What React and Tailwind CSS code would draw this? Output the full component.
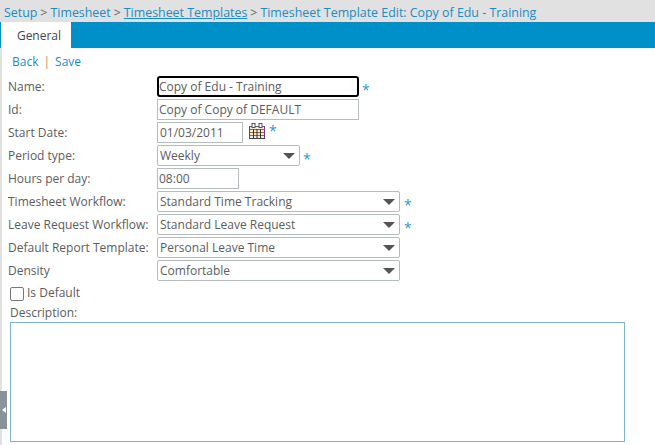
const blue = 'text-[#1a8cc4]';

function Star({ className = '' }) {
  return <span className={`text-[#2a9bd0] text-[14px] leading-none ${className}`}>*</span>;
}

function Row({ label, children }) {
  return (
    <div className="flex items-center h-[23px]">
      <div className="w-[150px] pl-[1px] shrink-0">{label}</div>
      {children}
    </div>
  );
}

function TextBox({ value, width, className = '' }) {
  return (
    <div className={`h-[21px] border border-[#b4bcbe] flex items-center pl-[1px] ${width} ${className}`}>{value}</div>
  );
}

function Select({ value, width }) {
  return (
    <div className={`h-[21px] border border-[#b4bcbe] rounded-[2px] flex items-center justify-between pl-[2px] pr-[3px] ${width}`}>
      <span>{value}</span>
      <svg width="12" height="6" viewBox="0 0 12 6" className="mr-[1px]"><path d="M0 0H12L6 6Z" fill="#555" /></svg>
    </div>
  );
}

function CalendarIcon() {
  return (
    <svg width="16" height="16" viewBox="0 0 16 16" className="ml-[6px] -mt-[4px]">
      <rect x="0.5" y="3.5" width="15" height="12" fill="#f3ead8" />
      <path d="M1 6.5H15M1 9.5H15M1 12.5H15" stroke="#a5672f" />
      <path d="M4.5 6V15M8 6V15M11.5 6V15" stroke="#333" />
      <path d="M0.5 3V16M15.5 3V16" stroke="#7a2f96" />
      <path d="M0 15.5H16" stroke="#444" />
      <path d="M1 3.5H15" stroke="#666" />
      <rect x="3" y="0.5" width="3" height="4" fill="#fff" stroke="#555" />
      <rect x="10" y="0.5" width="3" height="4" fill="#fff" stroke="#555" />
    </svg>
  );
}

export default function App() {
  return (
    <div className="h-[445px] w-[655px] overflow-hidden bg-white text-[12px] text-[#5c5c5c] font-['Open_Sans',sans-serif] flex flex-col relative">
      <div className={`h-[22px] bg-[#e1e1e1] flex items-center pl-[4px] pt-[4px] text-[12.4px] ${blue}`}>
        <span>Setup</span>
        <span className="mx-[3px] text-[#666]">&gt;</span>
        <span>Timesheet</span>
        <span className="mx-[3px] text-[#666]">&gt;</span>
        <span className="underline">Timesheet Templates</span>
        <span className="mx-[3px] text-[#666]">&gt;</span>
        <span>Timesheet Template Edit: Copy of Edu - Training</span>
      </div>
      <div className="h-[26px] bg-[#0090c9] pl-[1px] flex">
        <div className="w-[70px] bg-white flex items-center justify-center pl-[6px] pt-[1px] text-[12px] text-[#444]">General</div>
      </div>
      <div className="flex-1 border-l-2 border-[#e1e1e1] pl-[5px] flex flex-col">
        <div className={`h-[27px] flex items-center pl-[5px] pt-[1px] ${blue}`}>
          <span>Back</span>
          <span className="mx-[5px] text-[#c08a60]">|</span>
          <span>Save</span>
        </div>
        <Row label="Name:">
          <div className="h-[21px] w-[202px] border-2 border-black rounded-[3px] flex items-center">Copy of Edu - Training</div>
          <Star className="ml-[3px] mt-[6px]" />
        </Row>
        <Row label="Id:"><TextBox value="Copy of Copy of DEFAULT" width="w-[202px]" /></Row>
        <Row label="Start Date:">
          <TextBox value="01/03/2011" width="w-[86px]" className="pl-[2px]" />
          <CalendarIcon />
          <Star className="ml-[4px] -mt-[4px]" />
        </Row>
        <Row label="Period type:">
          <Select value="Weekly" width="w-[143px]" />
          <Star className="ml-[3px] mt-[6px]" />
        </Row>
        <Row label="Hours per day:"><TextBox value="08:00" width="w-[82px]" /></Row>
        <Row label="Timesheet Workflow:">
          <Select value="Standard Time Tracking" width="w-[243px]" />
          <Star className="ml-[4px] mt-[6px]" />
        </Row>
        <Row label="Leave Request Workflow:">
          <Select value="Standard Leave Request" width="w-[243px]" />
          <Star className="ml-[4px] mt-[6px]" />
        </Row>
        <Row label="Default Report Template:"><Select value="Personal Leave Time" width="w-[243px]" /></Row>
        <Row label="Density"><Select value="Comfortable" width="w-[243px]" /></Row>
        <div className="flex items-center h-[22px] pl-[3px]">
          <div className="w-[14px] h-[14px] border border-[#777] rounded-[2px] mr-[3px] mt-[2px]"></div>
          <span>Is Default</span>
        </div>
        <div className="h-[18px] pl-[3px] flex items-center">Description:</div>
        <div className="w-[615px] h-[120px] ml-[3px] border border-[#7fb5cc] shrink-0"></div>
      </div>
      <div className="absolute left-0 top-[391px] w-[7px] h-[38px] bg-[#8a939b] flex items-center justify-center">
        <span className="w-0 h-0 border-y-[3px] border-y-transparent border-r-[4px] border-r-white"></span>
      </div>
    </div>
  );
}
